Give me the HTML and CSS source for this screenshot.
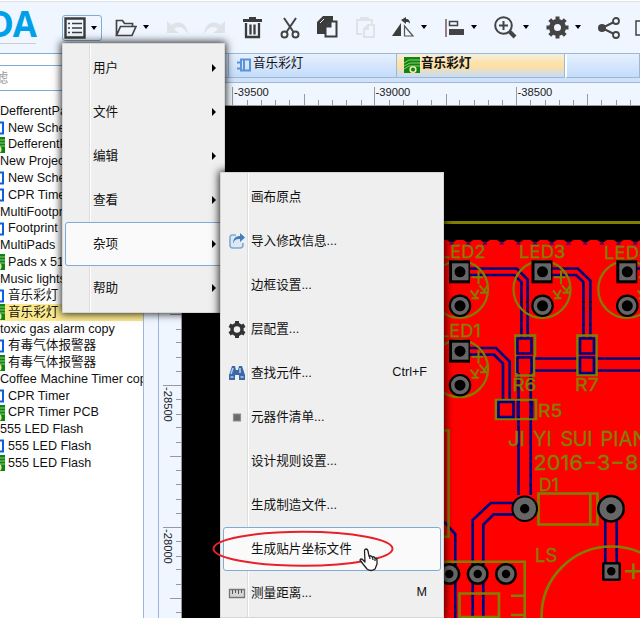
FILE: index.html
```html
<!DOCTYPE html>
<html lang="zh-CN">
<head>
<meta charset="utf-8">
<title>EDA</title>
<link rel="stylesheet" href="styles.css">
</head>
<body>
<svg class="defs" width="0" height="0">
  <symbol id="sch" viewBox="0 0 16 16"><path d="M5 2.500h9v11H5zM8 1.500v13M5 5.500H1m4 6H1" fill="none" stroke="currentColor" stroke-width="2"/></symbol>
  <symbol id="pcb" viewBox="0 0 16 16"><path d="M0 0h16v16H0z" fill="#108410"/><path d="M0 6l5-3h11M0 9l6-3h10M0 12l5-3h11" fill="none" stroke="#8ccb7a"/><circle cx="9" cy="12.500" r="2.800" fill="#108410" stroke="#f3e8b0" stroke-width="1.600"/></symbol>
  <symbol id="led" viewBox="-34 -32 66 64" overflow="visible">
    <circle r="28.500" fill="none" stroke="#808000" stroke-width="2.200"/>
    <path d="M12-12h11.500M19-18.500v13.500M11 1l6 7.500M19 .5l-4 7M12 9h7.500M20-4l6 7M28-3.500l-4 6M20.500 3.500H28" fill="none" stroke="#808000" stroke-width="2"/>
    <path d="M-10.500-29h21v23h-21z"/><path d="M-7.500-26H9v17H-7.500z" fill="#666"/><circle cx=".5" cy="-17.500" r="5.500"/>
    <circle cx=".5" cy="16.500" r="11.300"/><circle cx=".5" cy="16.500" r="7.300" fill="none" stroke="#666" stroke-width="3.600"/>
  </symbol>
  <symbol id="pad" viewBox="-11 -11 22 22" overflow="visible"><circle r="11"/><circle r="8.500" fill="#666"/><circle r="4.200"/></symbol>
</svg>

<header class="toolbar">
  <div class="logo">DA</div>
  <button class="tool menu-button">
    <svg width="22" height="22"><path d="M1.500 1.500h19v19h-19z" fill="none" stroke="#3c3c3c" stroke-width="2.400"/><path d="M8 6.500h10M8 11h10M8 15.500h10M4 6.500h2M4 11h2M4 15.500h2" stroke="#3c3c3c" stroke-width="1.600"/></svg>
    <i class="caret"></i>
  </button>
  <button class="tool folder"><svg width="22" height="18"><path d="M1.500 16.500V1.500h6l2 3h8v3M1.500 16.500l4-9h15.500l-4 9z" fill="none" stroke="#444" stroke-width="1.700"/></svg><i class="caret"></i></button>
  <button class="tool undo"><svg width="23" height="15"><path d="M1 1v12h12l-5-4c5-4 9-2 14 5C21 2 12 0 5 5z" fill="#dfe3e8"/></svg></button>
  <button class="tool redo"><svg width="23" height="15"><path d="M22 1v12H10l5-4C10 5 6 7 1 14 2 2 11 0 18 5z" fill="#dfe3e8"/></svg></button>
  <button class="tool trash"><svg width="19" height="23"><path d="M0 3h6V1h7v2h6v3H0z" fill="#3c3c3c"/><path d="M3 7v14h13V7M7.500 8.500v10M11.500 8.500v10" fill="none" stroke="#3c3c3c" stroke-width="2.300"/></svg></button>
  <button class="tool cut"><svg width="20" height="22"><g fill="none" stroke="#444" stroke-width="2"><circle cx="4.500" cy="17.500" r="3"/><circle cx="15.500" cy="17.500" r="3"/><path d="M4 1l9.500 14M16 1L6.500 15"/></g></svg></button>
  <button class="tool copy"><svg width="21" height="23"><path d="M6 0h10v18H0V6z" fill="#3c3c3c"/><path d="M8.500 9.500l4-4h7v15h-11zM8.500 10.500h5v-5" fill="#eff6ff" stroke="#3c3c3c" stroke-width="2"/><path d="M3 7l4-4" stroke="#eff6ff"/></svg></button>
  <button class="tool paste"><svg width="20" height="23"><g fill="none" stroke="#dfe3e8" stroke-width="2"><path d="M6 18H1V4h15v4M5 5V2h7v3"/><path d="M8 13l4-4h6v12H8zM8 13h4V9"/></g></svg></button>
  <button class="tool mirror"><svg width="23" height="22"><path d="M9 6v13H0z" fill="#3c3c3c"/><path d="M12.500 9v10H21z" fill="none" stroke="#555" stroke-width="1.200"/><path d="M9 3l5-3v2c3 0 4 2 4 5-1-2-2-2-4-2v2z" fill="#3c3c3c"/></svg><i class="caret"></i></button>
  <button class="tool align"><svg width="20" height="20"><path d="M1 1v18" stroke="#663c3c" stroke-width="1.300"/><path d="M4.500 3.500h8v4h-8z" fill="none" stroke="#444" stroke-width="1.500"/><path d="M4 11h15v6H4z" fill="#444"/></svg><i class="caret"></i></button>
  <button class="tool zoom"><svg width="23" height="23"><g fill="none" stroke="#444" stroke-width="2"><circle cx="9.500" cy="9.500" r="8.300"/><path d="M5 9.500h9M9.500 5v9"/><path d="M15.500 15.500l5.500 5.500" stroke-width="4"/></g></svg><i class="caret"></i></button>
  <button class="tool gear"><svg width="23" height="23"><g stroke="#444"><circle cx="11.500" cy="11.500" r="6" fill="none" stroke-width="5"/><path d="M11.500.5v4m0 14v4M.5 11.500h4m14 0h4M3.700 3.700l3 3m9.600 9.600l3 3m0-15.600l-3 3m-9.600 9.600l-3 3" stroke-width="4"/></g></svg><i class="caret"></i></button>
  <button class="tool share"><svg width="23" height="22"><path d="M18 4L4 11l14 7" fill="none" stroke="#444" stroke-width="2"/><circle cx="4" cy="11" r="4" fill="#444"/><circle cx="18" cy="4" r="3" fill="#eff6ff" stroke="#444" stroke-width="1.800"/><circle cx="18" cy="18" r="3" fill="#eff6ff" stroke="#444" stroke-width="1.800"/></svg></button>
  <button class="tool box"><svg width="16" height="16"><path d="M1 1h14v14H1z" fill="none" stroke="#444" stroke-width="1.500"/></svg></button>
</header>

<div class="workspace">
  <aside class="sidebar">
    <div class="filter"><span>过滤</span></div>
    <ul class="tree">
      <li>DefferentPads</li>
      <li class="doc"><svg class="sch"><use href="#sch"/></svg>New Schematic</li>
      <li class="doc"><svg><use href="#pcb"/></svg>DefferentPads</li>
      <li>New Project</li>
      <li class="doc"><svg class="sch"><use href="#sch"/></svg>New Schematic</li>
      <li class="doc"><svg class="sch"><use href="#sch"/></svg>CPR Timer</li>
      <li>MultiFootprint</li>
      <li class="doc"><svg class="sch"><use href="#sch"/></svg>Footprint</li>
      <li>MultiPads</li>
      <li class="doc"><svg><use href="#pcb"/></svg>Pads x 51</li>
      <li>Music lights</li>
      <li class="doc"><svg class="sch"><use href="#sch"/></svg>音乐彩灯</li>
      <li class="doc selected"><svg><use href="#pcb"/></svg>音乐彩灯</li>
      <li>toxic gas alarm copy</li>
      <li class="doc"><svg class="sch"><use href="#sch"/></svg>有毒气体报警器</li>
      <li class="doc"><svg><use href="#pcb"/></svg>有毒气体报警器</li>
      <li>Coffee Machine Timer copy</li>
      <li class="doc"><svg class="sch"><use href="#sch"/></svg>CPR Timer</li>
      <li class="doc"><svg><use href="#pcb"/></svg>CPR Timer PCB</li>
      <li>555 LED Flash</li>
      <li class="doc"><svg class="sch"><use href="#sch"/></svg>555 LED Flash</li>
      <li class="doc"><svg><use href="#pcb"/></svg>555 LED Flash</li>
    </ul>
  </aside>
  <div class="splitter"></div>
  <main class="editor">
    <nav class="tabs">
      <div class="tab lead"></div>
      <div class="tab"><svg class="tab-sch"><use href="#sch"/></svg>音乐彩灯</div>
      <div class="tab active"><svg><use href="#pcb"/></svg>音乐彩灯</div>
      <div class="tab rest"></div>
    </nav>
    <svg class="ruler-top" viewBox="159 83 481 23">
      <path d="M232.500 87v18M374.500 87v18M516.500 87v18M304.500 94v11M446.500 94v11M587.500 94v11M247.500 100v5M261.500 100v5M275.500 100v5M289.500 100v5M318.500 100v5M332.500 100v5M346.500 100v5M361.500 100v5M389.500 100v5M403.500 100v5M417.500 100v5M431.500 100v5M459.500 100v5M474.500 100v5M488.500 100v5M502.500 100v5M530.500 100v5M545.500 100v5M559.500 100v5M573.500 100v5M601.500 100v5M616.500 100v5M630.500 100v5M159 105.500h481"/>
      <text x="234" y="96">-39500</text><text x="375.500" y="96">-39000</text><text x="517.500" y="96">-38500</text>
    </svg>
    <div class="canvas-row">
      <svg class="ruler-left" viewBox="159 106 23 512">
        <path d="M163 385.500h18M163 527.500h18M170 314.500h11M170 456.500h11M170 598.500h11M176 329.500h5M176 342.500h5M176 357.500h5M176 371.500h5M176 399.500h5M176 414.500h5M176 427.500h5M176 442.500h5M176 470.500h5M176 484.500h5M176 499.500h5M176 513.500h5M176 541.500h5M176 556.500h5M176 569.500h5M176 584.500h5M176 612.500h5M181.500 106v512"/>
        <text transform="translate(164 387) rotate(90)">-28500</text><text transform="translate(164 529) rotate(90)">-28000</text>
      </svg>
      <svg class="board" viewBox="182 106 458 512">
        <defs><pattern id="edge" x="485" y="240" width="16.700" height="6" patternUnits="userSpaceOnUse"><path d="M0 6V3l2-1 3-2h7l3 2 1.700 1v3z" fill="red"/><path d="M0 1.500l1.500 3.500M16.700 1.500l-1.500 3.500" stroke="#400080" stroke-width="1.500"/></pattern></defs>
        <path d="M182 222.500h458" class="silk wide"/>
        <path d="M444 240h196v6H444z" fill="url(#edge)"/>
        <path d="M444 245.500h196V618H444z" fill="red"/>
        <g class="copper">
          <path d="M470 268.500h46.700l11 11V338M470 275h44.500l7 7v56M552 268.500h25.700l12.600 12V338M552 275h24l7.500 7v56M635 268.500h5"/>
          <path d="M470 348h26l13.700 13.500V402M470 354.700h24l9 8.800V402M534 358.500h44M534 370.500h44M597 358.500h43M597 370.500h43M518.500 373v122M530.700 373v122"/>
          <path d="M514 503h-23.300l-18 17v98M514 514.300h-20.300l-10.400 10.400V618M444 521.700l11.300 12.300v84M605.300 518v46M616.700 518v46"/>
        </g>
        <g class="silk">
          <path d="M515.500 335.500h19.500v20l-1 2v18h-18v-18zM577.500 335.500h19V375h-19zM496 400h40v19h-40z"/>
          <path d="M444 430.500h4.500v106.200H444M444 561.700h80.700V618M459.500 593.500H499v23.500h-39.500zM511 595.700h13M511 615h13M538.500 493.500h59v31h-59zM590.300 493.500v31M625 571.300h15M633.300 563.500v15.500"/>
          <circle cx="611.500" cy="616.500" r="70"/>
        </g>
        <path class="copper" d="M517.500 338.500h14v15h-14zM517.500 373v-15.500h14V373M580 338.500h14v15h-14zM580 373v-15.500h14V373zM498.500 402h15v15h-15zM520 402h-2v15h2M529 402h3v15h-3"/>
        <path d="M520 302h3M526 302h3M520 308.500h3M526 308.500h3M582 302h3M589 302h3M582 308.500h3M589 308.500h3" stroke="#180018" stroke-width="2"/>
        <use href="#led" x="425.500" y="257.300" width="66" height="64"/>
        <use href="#led" x="508" y="257.300" width="66" height="64"/>
        <use href="#led" x="592.800" y="257.300" width="66" height="64"/>
        <use href="#led" x="425.500" y="336.700" width="66" height="64"/>
        <use href="#pad" x="438.300" y="563" width="22" height="22"/>
        <use href="#pad" x="466.700" y="563" width="22" height="22"/>
        <use href="#pad" x="495" y="563" width="22" height="22"/>
        <g><circle cx="524.700" cy="508.700" r="13.300"/><circle cx="524.700" cy="508.700" r="11.300" fill="#666"/><circle cx="524.700" cy="508.700" r="4.700"/><circle cx="611" cy="508.700" r="14"/><circle cx="611" cy="508.700" r="11.500" fill="#666"/><circle cx="611" cy="508.700" r="4.700"/>
        <rect x="602" y="562" width="19" height="19" rx="2"/><path d="M604.500 564.500h14v14h-14z" fill="#666"/><circle cx="611.300" cy="571.300" r="4.200"/></g>
        <g class="label" font-size="17.500">
          <text x="440" y="258.300" textLength="45.500" lengthAdjust="spacingAndGlyphs">LED2</text><text x="519" y="258.300" textLength="46.500" lengthAdjust="spacingAndGlyphs">LED3</text><text x="604" y="259.300" textLength="47" lengthAdjust="spacingAndGlyphs">LED4</text><text x="439" y="337.300" textLength="42" lengthAdjust="spacingAndGlyphs">LED1</text>
          <text x="512.500" y="391" textLength="24" lengthAdjust="spacingAndGlyphs">R6</text><text x="575" y="391" textLength="24" lengthAdjust="spacingAndGlyphs">R7</text><text x="538" y="416.700" textLength="24.500" lengthAdjust="spacingAndGlyphs">R5</text><text x="539" y="490.700">D1</text>
          <text x="535" y="562" font-size="18.500">LS</text>
          <text x="508" y="445.700" font-size="20">JI</text><text x="533" y="445.700" font-size="20">YI</text><text x="560.500" y="445.700" font-size="20" textLength="32">SUI</text><text x="600.500" y="445.700" font-size="20">PIAN</text>
          <text x="533.500" y="470" font-size="20.500" textLength="105" lengthAdjust="spacingAndGlyphs">2016−3−8</text>
        </g>
      </svg>
    </div>
  </main>
</div>

<ul class="menu main-menu">
  <li>用户</li><li>文件</li><li>编辑</li><li>查看</li><li class="hover">杂项</li><li>帮助</li>
</ul>

<ul class="menu sub-menu">
  <li>画布原点</li>
  <li><svg class="icon" viewBox="0 0 18 18"><path d="M8 3H4Q2 3 2 6v7q0 3 3 3h7q3 0 3-3v-2" fill="#dce9f5" stroke="#7fa9d2" stroke-width="1.600"/><path d="M5 12c0-6 3-8 7-8V1l5 4.500-5 4.500V7c-4 0-6 1-7 5z" fill="#447db8"/></svg>导入修改信息...</li>
  <li>边框设置...</li>
  <li><svg class="icon" viewBox="0 0 18 18"><circle cx="9" cy="9.500" r="5" fill="none" stroke="#333" stroke-width="3.500"/><path d="M9 1v3m0 11v3M1.500 5.200l2.600 1.500m9.800 5.600l2.600 1.500m0-8.600l-2.600 1.500m-9.800 5.600l-2.600 1.500" stroke="#333" stroke-width="4"/></svg>层配置...</li>
  <li><svg class="icon" viewBox="0 0 18 18"><path d="M4 2h3l1 4h2l1-4h3l3 9v5h-6v-5H7v5H1v-5z" fill="#3c68a6"/><path d="M5 4L3 10m9-6v5M2.500 13h3m7 0h3" stroke="#a9cdf0" stroke-width="1.600"/></svg>查找元件...<kbd>Ctrl+F</kbd></li>
  <li><svg class="icon" viewBox="0 0 18 18"><path d="M5.500 6h7v7h-7z" fill="#666b6b" stroke="#8c9090" stroke-width="1.200"/></svg>元器件清单...</li>
  <li>设计规则设置...</li>
  <li>生成制造文件...</li>
  <li class="hover">生成贴片坐标文件</li>
  <li><svg class="icon" viewBox="0 0 18 18"><path d="M1.500 5.500h15v8h-15z" fill="#d5d5d5" stroke="#777" stroke-width="1.300"/><path d="M4.500 6v4M7.500 6v3M10.500 6v4M13.500 6v3" stroke="#555"/></svg>测量距离...<kbd>M</kbd></li>
</ul>

<svg class="callout" viewBox="212 528 184 48">
  <ellipse cx="303" cy="548.800" rx="89.500" ry="17" fill="none" stroke="#e8202a" stroke-width="2"/>
  <path d="M364.500 551q0-2 1.500-2t2 2l1 5q2-1 3 1 2-1 3 1 2 0 2 2v4l-2 5q-4 3-8 0l-4-5-3-4q1-2 3 0l2 2zM369.500 556l.5 3M372.500 557l.5 3M375 558v3" fill="#fff" stroke="#222" stroke-width="1.300" stroke-linejoin="round"/>
</svg>
</body>
</html>
```
FILE: styles.css
```css
* { box-sizing: border-box; }

body {
  margin: 0;
  width: 640px;
  height: 618px;
  overflow: hidden;
  position: relative;
  display: flex;
  flex-direction: column;
  background: #eff6ff;
  color: #111;
  font: 12.6px "Liberation Sans", "Noto Sans CJK SC", sans-serif;
}

ul { list-style: none; margin: 0; padding: 0; }
svg { display: block; flex: none; }
.defs { position: absolute; }

/* Toolbar */
.toolbar {
  height: 53px;
  flex: none;
  display: flex;
  align-items: flex-start;
  border-top: 1px solid #fff;
  box-shadow: inset 0 1px #dfe2e6;
}
.logo {
  width: 36px;
  height: 43px;
  margin-right: 26px;
  padding-top: 5px;
  display: flex;
  justify-content: flex-end;
  border-bottom: 1px solid #ccc;
  color: #00a0e9;
  font: bold 35px/36px "Open Sans", sans-serif;
  letter-spacing: -1px;
}
.tool {
  display: flex;
  align-items: center;
  flex: none;
  gap: 6px;
  height: 26px;
  margin: 14px 0 0;
  padding: 0 0 1px;
  border: 0;
  background: none;
}
.caret {
  margin-bottom: 1px;
  border: 3.5px solid transparent;
  border-top: 4px solid #000;
  border-bottom: 0;
}
.menu-button {
  width: 40px;
  gap: 5px;
  padding: 0 0 0 1px;
  border: 1px solid #7fabd4;
  border-radius: 3px;
}
.folder { margin-left: 13px; }
.undo { margin-left: 17px; }
.redo { margin-left: 14px; }
.trash { margin-left: 17px; }
.cut { margin-left: 18px; }
.copy { margin-left: 17px; }
.paste { margin-left: 18px; }
.mirror { margin-left: 16px; }
.align { margin-left: 18px; }
.zoom { margin-left: 17px; }
.gear { margin-left: 17px; }
.share { margin-left: 17px; }
.box { margin-left: 14px; }

/* Project tree */
.workspace { flex: 1; min-height: 0; display: flex; }
.sidebar {
  width: 143px;
  flex: none;
  overflow: hidden;
  padding-top: 11px;
  border-top: 1px solid #7fabd4;
  background: #fff;
}
.filter {
  height: 26px;
  border: solid #7fabd4;
  border-width: 1px 0;
  color: #999;
  line-height: 25px;
}
.filter span { margin-left: -17px; }
.tree { padding-top: 12px; white-space: nowrap; }
.tree li { height: 16.76px; line-height: 17px; }
.doc { display: flex; align-items: center; }
.doc svg { width: 16px; height: 16px; margin: 0 3px 0 -11px; }
.sch { color: #0c5fe0; }
.selected { background: #fce98d; }
.splitter {
  width: 16px;
  flex: none;
  border: solid #9fb6dc;
  border-width: 0 1px;
}

/* Editor */
.editor { flex: 1; min-width: 0; display: flex; flex-direction: column; }
.tabs {
  height: 30px;
  flex: none;
  display: flex;
  align-items: flex-start;
  padding-bottom: 4px;
  border-top: 1px solid #9bb9d6;
  border-bottom: 1px solid #9bb9d6;
  background: #cfe2fa;
}
.tab {
  width: 168px;
  height: 24px;
  flex: none;
  display: flex;
  gap: 1px;
  padding: 2px 0 0 7px;
  border: solid #9bb9d6;
  border-width: 0 1px 1px 0;
  background: linear-gradient(#e6f0fe, #c4dcfa);
  line-height: 15px;
}
.tab.lead { width: 70px; }
.tab.active {
  background: linear-gradient(#f3f0e2, #ffe0a0 45%, #ffe0a0 50%, #c6dcf8);
  font-weight: bold;
}
.tab.rest { flex: 1; border-left: 2px solid #fff; }
.tab svg { width: 16px; height: 16px; margin-top: 1px; }
.tab .tab-sch { color: #5b92dc; }
.ruler-top { width: 481px; height: 23px; }
.ruler-top path, .ruler-left path { stroke: #999; fill: none; }
.ruler-top text, .ruler-left text { font-size: 11.2px; fill: #222; }
.canvas-row { display: flex; height: 512px; background: #000; }
.ruler-left { width: 23px; height: 512px; background: #eff6ff; }
.board { width: 458px; height: 512px; background: #000; }
.silk { fill: none; stroke: #808000; stroke-width: 2.6; }
.silk.wide { stroke-width: 3; }
.copper { fill: none; stroke: #000080; stroke-width: 2.7; }
.label { fill: #808000; stroke: #808000; stroke-width: .3; font-family: Inter, sans-serif; }

/* Floating menus */
.menu {
  position: absolute;
  padding: 2px;
  border: 1px solid #d6d6d6;
  background: linear-gradient(90deg, transparent 26px, #ddd 26px, #ddd 27px, #fff 27px, #fff 28px, transparent 28px) #efefef;
  box-shadow: 0 0 8px 1px rgba(0, 0, 0, .85);
}
.menu li {
  display: flex;
  align-items: center;
  height: 44px;
  padding: 0 13px 4px 27px;
  border: 1px solid transparent;
  border-radius: 3px;
}
.menu .hover { background: #fafafa; border-color: #7fabd4; }
.main-menu { left: 62px; top: 43px; width: 163px; }
.main-menu li::after {
  content: "";
  margin: 4px -8px 0 auto;
  border: 4px solid transparent;
  border-left: 4px solid #000;
  border-right: 0;
}
.sub-menu { left: 220px; top: 172px; width: 224px; }
.icon { width: 18px; height: 18px; margin: 3px 5px 0 -23px; }
.menu kbd { margin: 2px 0 0 auto; font: inherit; }
.callout { position: absolute; left: 212px; top: 528px; width: 184px; height: 48px; }
```
